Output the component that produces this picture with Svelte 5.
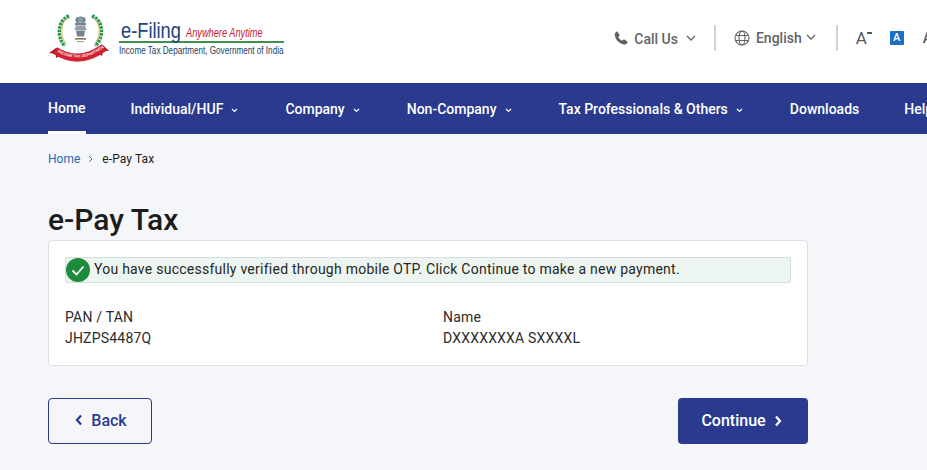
<script>
  const menu = [
    { label: "Individual/HUF", caret: true },
    { label: "Company", caret: true },
    { label: "Non-Company", caret: true },
    { label: "Tax Professionals & Others", caret: true },
    { label: "Downloads", caret: false },
    { label: "Help", caret: false }
  ];
</script>

<div class="page">
  <header class="top">
    <a class="logo" href="#home">
      <svg class="seal" width="68" height="50" viewBox="0 0 68 50">
        <defs>
          <path id="ribbon-line" d="M7 37.500 Q31 53 56 34.500" />
        </defs>
        <g fill="none" stroke="#2f9450" stroke-width="3.600" stroke-dasharray="2.600 0.900">
          <path d="M21 3 C10 7 8 24 17 33" />
          <path d="M44 3 C55 7 57 24 47 33" />
        </g>
        <g fill="none" stroke="#d9b23c" stroke-width="0.800">
          <path d="M18 6 C13 11 12 23 18 30" />
          <path d="M47 6 C52 11 53 23 47 30" />
        </g>
        <g fill="#74838f">
          <ellipse cx="30" cy="7" rx="2.600" ry="3" />
          <ellipse cx="35" cy="7" rx="2.600" ry="3" />
          <ellipse cx="32.500" cy="6.500" rx="2.400" ry="3.200" fill="#8b99a3" />
          <rect x="27" y="10" width="11" height="2.200" />
          <path d="M28 12.500h9l1.500 4.500h-12z" fill="#93a0a9" />
          <path d="M28 17.500h9l-1 6h-7z" />
        </g>
        <rect x="27" y="25" width="11" height="1.600" fill="#7d7a54" />
        <rect x="29" y="28" width="7" height="1.200" fill="#a9a68c" />
        <path d="M8 35 L1 40 L8 41 L8 45 L17 40 Z" fill="#b3152b" />
        <path d="M55 32 L61 38 L55 38 L54 43 L46 38 Z" fill="#b3152b" />
        <path d="M7 37.500 Q31 53 56 34.500" fill="none" stroke="#d1202f" stroke-width="8" />
        <text class="seal-text"><textPath href="#ribbon-line" startOffset="3">INCOME TAX DEPARTMENT</textPath></text>
      </svg>
      <span class="wordmark">
        <span class="mark-top"><span class="efiling">e-Filing</span><span class="tagline">Anywhere Anytime</span></span>
        <span class="dept">Income Tax Department, Government of India</span>
      </span>
    </a>

    <div class="tools">
      <button class="tool">
        <svg width="16" height="16" viewBox="0 0 24 24" fill="#5f6368">
          <path d="M6.600 2.500 9.800 7c.3.500.3 1.100-.1 1.500L8 10.500c1.300 2.500 3 4.300 5.600 5.600l2-1.700c.4-.4 1-.4 1.500-.1l4.400 3.100c.5.400.6 1 .3 1.500-1 1.700-2.500 3-4.300 3C10 21.500 2.600 14 2.600 6.500c0-1.800 1.300-3.300 3-4.200.4-.2.800-.1 1 .2z" />
        </svg>
        <span class="call">Call Us</span>
        <svg class="chev" width="10" height="6" viewBox="0 0 10 6"><path d="M1 1l4 4 4-4" /></svg>
      </button>
      <span class="sep"></span>
      <button class="tool lang">
        <svg width="16" height="16" viewBox="0 0 16 16" fill="none" stroke="#5f6368" stroke-width="1.100">
          <circle cx="8" cy="8" r="7" />
          <ellipse cx="8" cy="8" rx="3" ry="7" />
          <path d="M1.500 5.500h13M1.500 10.500h13" />
        </svg>
        <span>English</span>
        <svg class="chev" width="10" height="6" viewBox="0 0 10 6"><path d="M1 1l4 4 4-4" /></svg>
      </button>
      <span class="sep"></span>
      <span class="font-a">A<i></i></span>
      <span class="font-box">A</span>
      <span class="font-c">A</span>
    </div>
  </header>

  <nav class="nav">
    <a class="item active" href="#home">Home</a>
    {#each menu as m}
      <a class="item" href="#menu">
        {m.label}
        {#if m.caret}
          <svg width="7" height="5" viewBox="0 0 7 5"><path d="M1 1l2.500 2.500L6 1" /></svg>
        {/if}
      </a>
    {/each}
  </nav>

  <main class="content">
    <div class="crumbs">
      <a href="#home">Home</a>
      <svg width="6" height="8" viewBox="0 0 6 8"><path d="M1 1l3 3-3 3" /></svg>
      <span class="current">e-Pay Tax</span>
    </div>

    <h1>e-Pay Tax</h1>

    <section class="card">
      <div class="alert">
        <span class="tick">
          <svg width="14" height="11" viewBox="0 0 14 11"><path d="M1.500 5.500l4 4 7-8" /></svg>
        </span>
        <span class="alert-text">You have successfully verified through mobile OTP. Click Continue to make a new payment.</span>
      </div>
      <div class="details">
        <div>
          <p>PAN / TAN</p>
          <p>JHZPS4487Q</p>
        </div>
        <div>
          <p>Name</p>
          <p>DXXXXXXXA SXXXXL</p>
        </div>
      </div>
    </section>

    <div class="actions">
      <button class="btn back">
        <svg width="8" height="12" viewBox="0 0 8 12"><path d="M6 1.500L2 6l4 4.500" /></svg>
        Back
      </button>
      <button class="btn next">
        Continue
        <svg width="8" height="12" viewBox="0 0 8 12"><path d="M2 1.500L6 6l-4 4.500" /></svg>
      </button>
    </div>
  </main>
</div>

<style>
  :global(body) {
    margin: 0;
    overflow: hidden;
    background: #f5f6fa;
    font-family: Roboto, "Liberation Sans", sans-serif;
  }
  a {
    text-decoration: none;
  }
  button {
    font-family: inherit;
    background: none;
    border: 0;
    padding: 0;
    cursor: pointer;
  }
  .page {
    width: 927px;
    height: 470px;
    overflow: hidden;
  }
  .top {
    height: 83px;
    background: #fff;
    display: flex;
    justify-content: space-between;
    padding-left: 48px;
    box-sizing: border-box;
  }
  .logo {
    display: flex;
    align-items: flex-start;
    padding-top: 13px;
    gap: 3px;
  }
  .seal {
    flex: none;
  }
  .seal-text {
    font-family: "Liberation Sans", sans-serif;
    font-size: 3.900px;
    font-weight: 700;
    fill: #fbe9e9;
  }
  .wordmark {
    display: flex;
    flex-direction: column;
    width: 165px;
  }
  .mark-top {
    display: flex;
    align-items: baseline;
    gap: 5px;
    padding: 7px 0 0 2px;
    height: 30px;
    border-bottom: 2px solid #3f8f4f;
    box-sizing: border-box;
    font-family: "Liberation Sans", sans-serif;
    white-space: nowrap;
  }
  .efiling {
    display: inline-block;
    width: 60px;
    color: #20447c;
    font-size: 22px;
    line-height: 22px;
    transform: scaleX(0.83);
    transform-origin: left;
  }
  .tagline {
    display: inline-block;
    width: 77px;
    color: #c8202f;
    font-size: 13px;
    font-style: italic;
    transform: translateY(-1px) scaleX(0.71);
    transform-origin: left;
  }
  .dept {
    font-family: "Liberation Sans", sans-serif;
    font-size: 10.500px;
    color: #24405f;
    line-height: 15px;
    white-space: nowrap;
    transform: scaleX(0.775);
    transform-origin: left;
  }
  .tools {
    display: flex;
    align-items: center;
    height: 76px;
    color: #5f6368;
    font-size: 14px;
    white-space: nowrap;
    margin-right: -5px;
  }
  .tool {
    display: flex;
    align-items: center;
    color: #5f6368;
    font-size: 14px;
    font-weight: 500;
    gap: 5px;
  }
  .call {
    padding-top: 2px;
  }
  .tool .chev {
    margin-left: 3px;
    fill: none;
    stroke: #5f6368;
    stroke-width: 1.300;
  }
  .lang {
    gap: 6px;
  }
  .lang .chev {
    margin-left: -2px;
    margin-right: 2px;
    margin-top: -3px;
  }
  .sep {
    width: 2px;
    height: 26px;
    background: #cfd2d6;
    margin: 0 18px;
  }
  .font-a {
    position: relative;
    font-size: 17px;
    font-weight: 400;
    color: #55585c;
    width: 15px;
  }
  .font-a i {
    position: absolute;
    right: -1px;
    top: 4px;
    width: 5px;
    height: 1.500px;
    background: #55585c;
  }
  .font-box {
    width: 14px;
    height: 14px;
    margin-left: 19px;
    background: #1a6fc4;
    color: #fff;
    font-size: 11px;
    font-weight: 500;
    line-height: 14px;
    text-align: center;
    border-radius: 1px;
  }
  .font-c {
    margin-left: 19px;
    font-size: 14px;
    font-weight: 500;
    color: #55585c;
  }
  .nav {
    height: 51px;
    background: #2a3a8e;
    display: flex;
    gap: 45px;
    padding-left: 48px;
    white-space: nowrap;
  }
  .item {
    display: flex;
    align-items: center;
    gap: 7px;
    color: #fff;
    font-size: 14px;
    font-weight: 500;
    padding-top: 1px;
    box-sizing: border-box;
  }
  .item svg {
    fill: none;
    stroke: #fff;
    stroke-width: 1.200;
    margin: 2px 2px 0 1px;
  }
  .item.active {
    padding: 1px 0 0;
    border-bottom: 3px solid #fff;
  }
  .content {
    padding: 0 48px;
    width: 760px;
  }
  .crumbs {
    display: flex;
    align-items: center;
    gap: 8px;
    padding-top: 17px;
    font-size: 12px;
    line-height: 16px;
    color: #1c1c1c;
  }
  .crumbs a {
    color: #1a6bb8;
  }
  .crumbs svg {
    fill: none;
    stroke: #666;
    stroke-width: 1;
  }
  .current {
    letter-spacing: 0.1px;
  }
  h1 {
    margin: 34px 0 0;
    font-size: 30px;
    line-height: 38px;
    font-weight: 500;
    color: #1c1c1c;
  }
  .card {
    margin-top: 1px;
    background: #fff;
    border: 1px solid #dcdfe8;
    border-radius: 4px;
    padding: 16px;
    height: 126px;
    box-sizing: border-box;
  }
  .alert {
    display: flex;
    align-items: center;
    height: 26px;
    box-sizing: border-box;
    background: #edf5f0;
    border: 1px solid #d6dde0;
    border-radius: 2px;
    font-size: 14px;
    letter-spacing: 0.25px;
    color: #262626;
    gap: 4px;
  }
  .alert-text {
    padding-bottom: 2px;
  }
  .tick {
    width: 24px;
    height: 24px;
    border-radius: 50%;
    background: #1e8a3c;
    display: flex;
    align-items: center;
    justify-content: center;
    flex: none;
  }
  .tick svg {
    fill: none;
    stroke: #fff;
    stroke-width: 1.800;
  }
  .details {
    display: grid;
    grid-template-columns: 378px 1fr;
    margin-top: 24px;
    font-size: 14px;
    letter-spacing: 0.2px;
    color: #2b2b2b;
  }
  .details p {
    margin: 0;
    line-height: 21px;
  }
  .actions {
    display: flex;
    justify-content: space-between;
    margin-top: 32px;
  }
  .btn {
    height: 46px;
    border-radius: 4px;
    display: flex;
    align-items: center;
    justify-content: center;
    gap: 8px;
    font-size: 16px;
    font-weight: 500;
    box-sizing: border-box;
  }
  .btn svg {
    fill: none;
    stroke-width: 2.200;
  }
  .back {
    width: 104px;
    color: #2a3a8e;
    border: 1px solid #2a3a8e;
    padding-left: 2px;
    padding-bottom: 2px;
  }
  .back svg {
    stroke: #2a3a8e;
  }
  .next {
    width: 130px;
    color: #fff;
    background: #2a3a8e;
    padding: 0 3px 1px 0;
  }
  .next svg {
    stroke: #fff;
  }
</style>
